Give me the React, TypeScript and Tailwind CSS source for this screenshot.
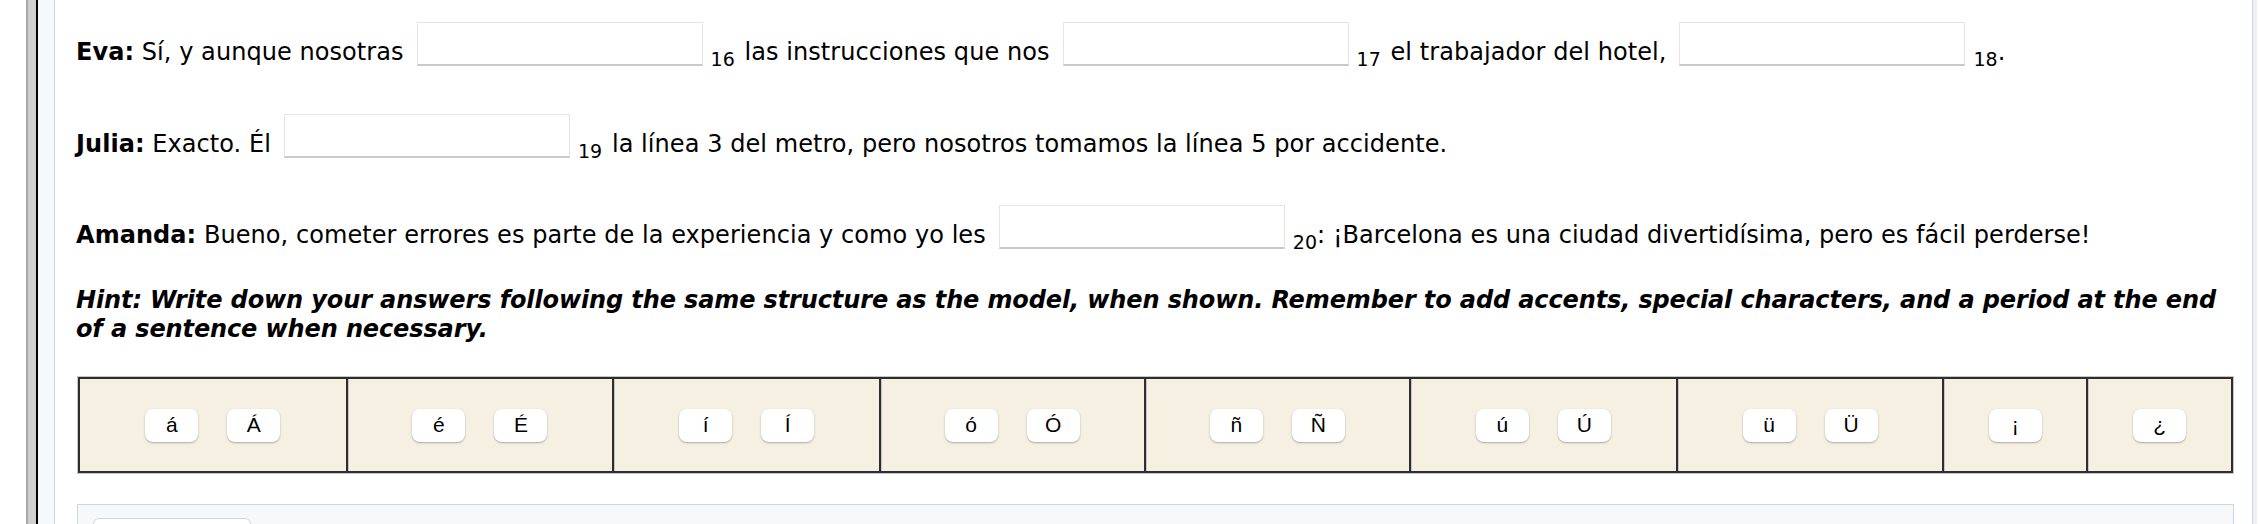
import React from 'react';

const TEXT_FONT = 'font-["DejaVu_Sans",Verdana,sans-serif]';

const charGroups: string[][] = [
  ['á', 'Á'],
  ['é', 'É'],
  ['í', 'Í'],
  ['ó', 'Ó'],
  ['ñ', 'Ñ'],
  ['ú', 'Ú'],
  ['ü', 'Ü'],
  ['¡'],
  ['¿'],
];

function Blank() {
  return (
    <input
      type="text"
      className="ml-[13px] mr-[8px] inline-block h-[44px] w-[286px] border border-[#e4e4e4] border-b-2 border-b-[#c9c9c9] bg-white align-text-bottom outline-none"
    />
  );
}

// number under a blank; "tight" when punctuation follows right after it
function Num({ n, tight }: { n: number; tight?: boolean }) {
  return <sub className={`bottom-[-6px] text-[19px] ${tight ? '' : 'mr-[2px]'}`}>{n}</sub>;
}

function CharButton({ ch }: { ch: string }) {
  return (
    <button
      type="button"
      className='flex h-[33px] w-[53px] items-center justify-center rounded-[8px] bg-white font-["Liberation_Sans",Arial,sans-serif] text-[21px] text-black shadow-[0_1px_2px_rgba(0,0,0,0.3)]'
    >
      {ch}
    </button>
  );
}

export default function App() {
  return (
    <div className="flex h-[524px] w-[2260px] overflow-hidden bg-white">
      {/* window chrome on the left */}
      <div className="w-[26px] shrink-0 bg-white" />
      <div className="w-[2px] shrink-0 bg-[#a9a9a9]" />
      <div className="w-[8px] shrink-0 bg-[#cfcfcf]" />
      <div className="w-[2px] shrink-0 bg-black" />
      <div className="w-[17px] shrink-0 border-r border-[#cfd5df] bg-[#f7f8fa]" />

      <main className={`w-[2197px] shrink-0 pl-[21px] pr-[18px] text-[24px] text-black ${TEXT_FONT}`}>
        <div className="mt-[22px] leading-[normal] tracking-[0.06px] whitespace-nowrap">
          <b>Eva:</b> Sí, y aunque nosotras
          <Blank />
          <Num n={16} /> las instrucciones que nos
          <Blank />
          <Num n={17} /> el trabajador del hotel,
          <Blank />
          <Num n={18} tight />.
        </div>

        <div className="mt-[48px] leading-[normal] tracking-[0.06px] whitespace-nowrap">
          <b>Julia:</b> Exacto. Él
          <Blank />
          <Num n={19} /> la línea 3 del metro, pero nosotros tomamos la línea 5 por accidente.
        </div>

        <div className="mt-[47px] leading-[normal] tracking-[0.06px] whitespace-nowrap">
          <b>Amanda:</b> Bueno, cometer errores es parte de la experiencia y como yo les
          <Blank />
          <Num n={20} tight />: ¡Barcelona es una ciudad divertidísima, pero es fácil perderse!
        </div>

        <p className="mt-[37px] font-bold italic leading-[29px] tracking-[-0.12px]">
          <span className="whitespace-nowrap">
            Hint: Write down your answers following the same structure as the model, when shown. Remember to add
            accents, special characters, and a period at the end
          </span>
          <br />
          of a sentence when necessary.
        </p>

        {/* special characters keyboard */}
        <div className="ml-[1px] mt-[32px] border border-[#c6c6c6]">
          <div className="grid h-[96px] grid-cols-[266fr_267fr_267fr_265fr_266fr_267fr_267fr_144fr_145fr] border-2 border-[#2e2e2e] bg-[#f6f0e3]">
            {charGroups.map((group, i) => (
              <div
                key={i}
                className={`flex items-center justify-center gap-[29px] ${
                  i > 0 ? 'border-l-2 border-[#2e2e2e] shadow-[inset_1px_0_0_#c6c6c6]' : ''
                }`}
              >
                {group.map((ch) => (
                  <CharButton key={ch} ch={ch} />
                ))}
              </div>
            ))}
          </div>
        </div>

        <div className="ml-[1px] mt-[30px] h-[40px] border border-[#cfd6df] bg-[#f7f8fa] pl-[15px] pt-[13px]">
          <div className="h-[30px] w-[158px] rounded-t-[6px] border border-[#d0d5dd] bg-white" />
        </div>
      </main>

      <div className="w-[1px] shrink-0 bg-[#cfd5df]" />
      <div className="w-[4px] shrink-0 bg-[#eef0f3]" />
      <div className="flex-1 bg-white" />
    </div>
  );
}
